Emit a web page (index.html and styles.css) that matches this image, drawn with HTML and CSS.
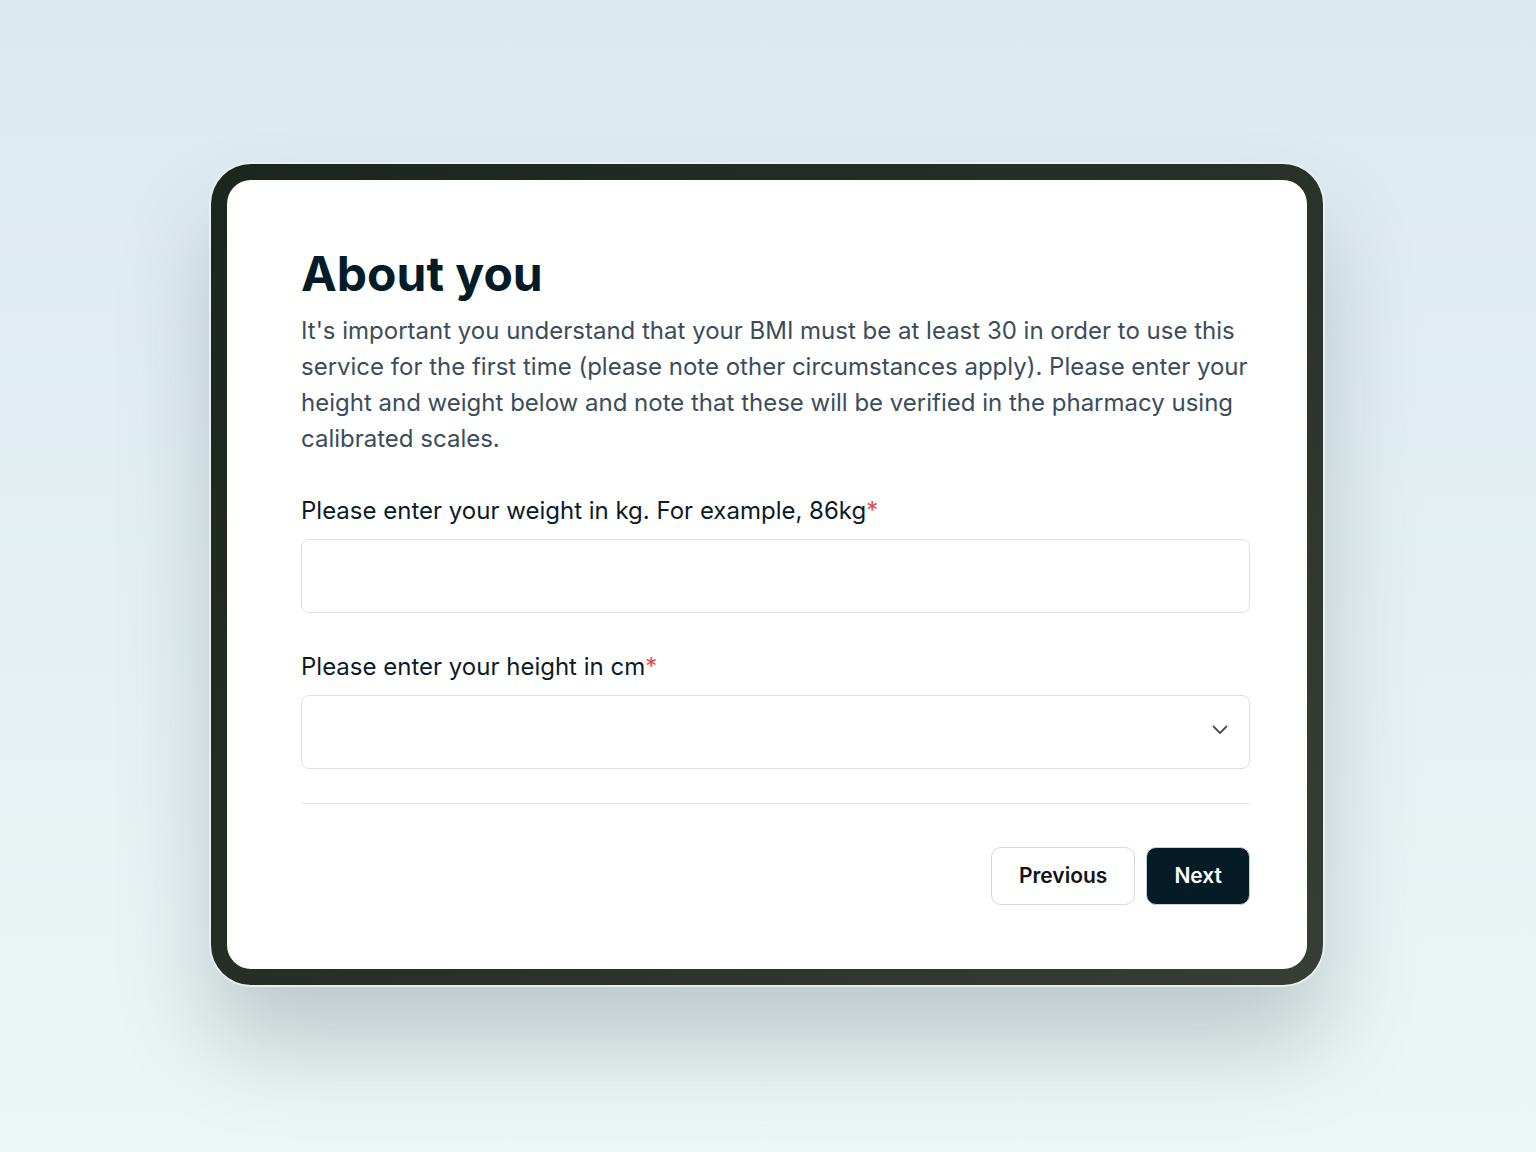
FILE: index.html
```html
<!DOCTYPE html>
<html lang="en">
<head>
  <meta charset="UTF-8">
  <meta name="viewport" content="width=device-width, initial-scale=1.0">
  <title>About you</title>
  <link rel="stylesheet" href="styles.css">
</head>
<body>
  <div class="device">
    <div class="screen">
      <form class="step">
        <h1 class="step-title">About you</h1>
        <p class="step-intro">It's important you understand that your BMI must be at least 30 in order to use this service for the first time (please note other circumstances apply). Please enter your height and weight below and note that these will be verified in the pharmacy using calibrated scales.</p>

        <div class="field">
          <label class="field-label" for="weight">Please enter your weight in kg. For example, 86kg<span class="required">*</span></label>
          <input class="field-input" id="weight" type="text">
        </div>

        <div class="field">
          <label class="field-label" for="height">Please enter your height in cm<span class="required">*</span></label>
          <div class="select-wrap">
            <select class="field-input field-select" id="height">
              <option></option>
            </select>
            <svg class="chevron" width="18" height="18" viewBox="0 0 18 18" fill="none">
              <path d="M2.5 5.5L9 12l6.5-6.5" stroke="#4a5058" stroke-width="1.8" stroke-linecap="round" stroke-linejoin="round"/>
            </svg>
          </div>
        </div>

        <div class="step-actions">
          <button type="button" class="btn btn-secondary">Previous</button>
          <button type="button" class="btn btn-primary">Next</button>
        </div>
      </form>
    </div>
  </div>
</body>
</html>
```

FILE: styles.css
```css
body {
  margin: 0;
  min-height: 1152px;
  display: flex;
  justify-content: center;
  align-items: flex-start;
  padding: 164px 2px 0 0;
  box-sizing: border-box;
  background: linear-gradient(180deg, #dce9f1 0%, #e4f0f3 55%, #ecf6f5 100%);
  font-family: "Inter", "Noto Sans", sans-serif;
}

/* Tablet frame */
.device {
  width: 1112px;
  padding: 16px;
  box-sizing: border-box;
  border-radius: 40px;
  background: linear-gradient(135deg, #1b261d 0%, #273027 50%, #363e35 100%);
  box-shadow:
    0 0 0 2px rgba(236, 240, 242, 0.9),
    0 60px 90px rgba(80, 95, 100, 0.28);
}

.screen {
  background: #fff;
  border-radius: 24px;
  padding: 65px 57px 64px 74px;
}

.step-title {
  margin: 0;
  font-size: 48px;
  line-height: 1.2;
  font-weight: 700;
  color: #041c28;
}

.step-intro {
  margin: 10px 0 0;
  font-size: 24px;
  line-height: 36px;
  color: #3b4d5a;
}

.field {
  display: flex;
  flex-direction: column;
  gap: 12px;
  margin-top: 38px;
}

.field + .field {
  margin-top: 38px;
}

.field-label {
  font-size: 24px;
  line-height: 32px;
  color: #0b1c28;
}

.required {
  color: #e5484d;
}

.field-input {
  display: block;
  width: 100%;
  height: 74px;
  box-sizing: border-box;
  margin: 0;
  border: 1px solid #dfe1e6;
  border-radius: 8px;
  background: #fff;
  font: inherit;
  font-size: 24px;
  padding: 0 20px;
}

.select-wrap {
  position: relative;
}

.field-select {
  appearance: none;
  -webkit-appearance: none;
}

.chevron {
  position: absolute;
  right: 21px;
  top: 26px;
  pointer-events: none;
}

.step-actions {
  display: flex;
  justify-content: flex-end;
  gap: 11px;
  margin-top: 34px;
  padding-top: 43px;
  border-top: 1px solid #e3e5ea;
}

.btn {
  height: 58px;
  padding: 0 27px;
  border-radius: 10px;
  font: inherit;
  font-size: 21px;
  font-weight: 600;
  cursor: pointer;
}

.btn-secondary {
  background: #fff;
  border: 1px solid #d4d8de;
  color: #101418;
}

.btn-primary {
  background: #051c27;
  border: 1px solid #c9ced4;
  color: #fff;
}
```
